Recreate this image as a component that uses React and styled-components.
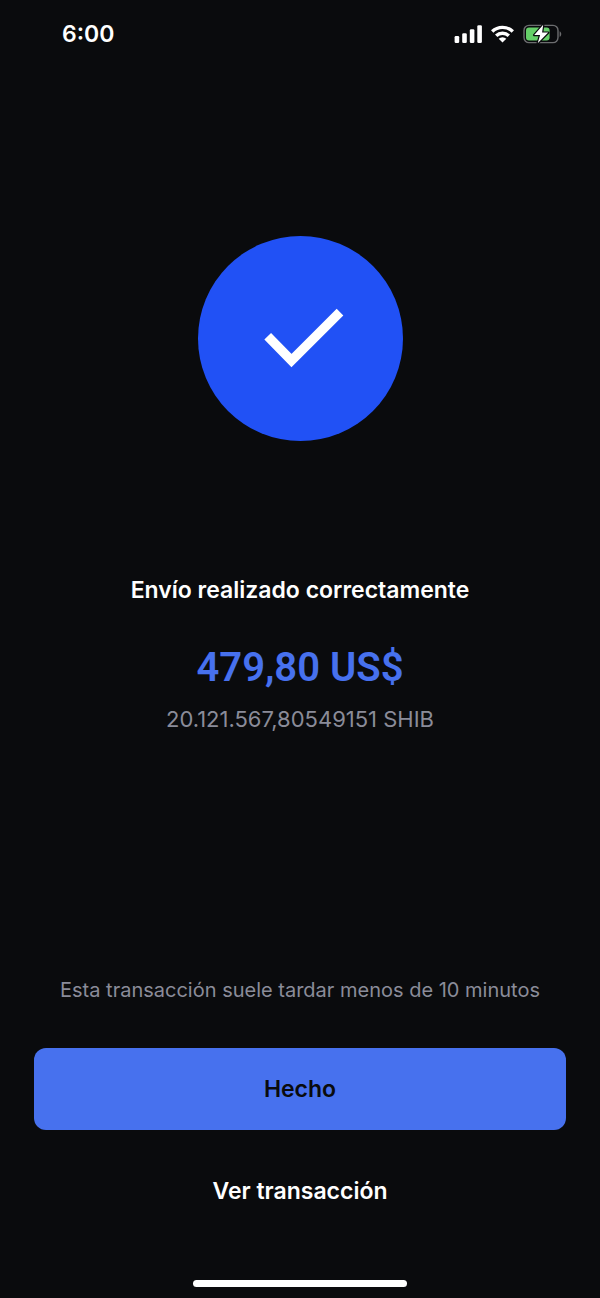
import React from 'react'
import styled, {createGlobalStyle} from 'styled-components'

const GlobalStyle = createGlobalStyle`
  * {
    box-sizing: border-box;
  }

  body {
    margin: 0;
    background-color: #0a0b0d;
    font-family: Inter, 'Liberation Sans', sans-serif;
  }
`

const Screen = styled.div`
  display: flex;
  flex-direction: column;
  min-height: 100vh;
  color: #ffffff;
`

const StatusBar = styled.header`
  display: flex;
  align-items: center;
  justify-content: space-between;
  height: 68px;
  padding: 0 38px 0 62px;
`

const Clock = styled.time`
  font-size: 23px;
  line-height: 28px;
  font-weight: 600;
`

const StatusIcons = styled.div`
  display: flex;
  align-items: center;
  gap: 8px;

  svg {
    display: block;
  }
`

const Content = styled.main`
  display: flex;
  flex: 1;
  flex-direction: column;
  align-items: center;
  justify-content: center;
  padding: 0 32px;
  text-align: center;
`

const Badge = styled.div`
  width: 205px;
  height: 205px;
  margin-bottom: 133px;
  border-radius: 50%;
  background-color: #2151f5;
`

const Title = styled.h1`
  margin: 0 0 38px;
  font-size: 23px;
  line-height: 32px;
  font-weight: 600;
`

const Amount = styled.p`
  margin: 0 0 11px;
  color: #4771ee;
  font-family: Roboto, Inter, sans-serif;
  font-size: 40px;
  line-height: 48px;
  font-weight: 600;
`

const CryptoAmount = styled.p`
  margin: 0;
  color: #8a8c99;
  font-size: 22px;
  line-height: 32px;
`

const Footer = styled.footer`
  display: flex;
  flex-direction: column;
  align-items: center;
  padding: 72px 34px 11px;
`

const Note = styled.p`
  margin: 0 0 42px;
  color: #8a8c99;
  font-size: 20px;
  line-height: 32px;
  text-align: center;
`

const Button = styled.button`
  width: 100%;
  height: 82px;
  border: 0;
  border-radius: 12px;
  background-color: ${({$primary}) => ($primary ? '#4771ee' : 'transparent')};
  color: ${({$primary}) => ($primary ? '#0a0b0d' : '#ffffff')};
  font-family: inherit;
  font-size: 23px;
  line-height: 32px;
  font-weight: 600;
  cursor: pointer;

  & + & {
    margin-top: 20px;
  }
`

const HomeIndicator = styled.div`
  width: 214px;
  height: 7px;
  margin-top: 48px;
  border-radius: 4px;
  background-color: #ffffff;
`

const SignalIcon = () => (
  <svg width='28' height='20' viewBox='0 0 28 20' fill='#fff' aria-hidden='true'>
    <rect x='0.6' y='12' width='4.6' height='7' rx='1.3' />
    <rect x='8.2' y='9.2' width='4.6' height='9.8' rx='1.3' />
    <rect x='15.8' y='5.2' width='4.6' height='13.8' rx='1.3' />
    <rect x='23.3' y='1.2' width='4.6' height='17.8' rx='1.3' />
  </svg>
)

const WifiIcon = () => (
  <svg width='25' height='20' viewBox='0 0 25 20' aria-hidden='true'>
    <g fill='none' stroke='#fff' strokeWidth='3.4'>
      <path d='M2.2 7.5a14.8 14.8 0 0 1 20.6 0' />
      <path d='M6.2 11.8a9 9 0 0 1 12.6 0' />
    </g>
    <path d='M12.5 18.6l-3.8-3.9a5.5 5.5 0 0 1 7.6 0z' fill='#fff' />
  </svg>
)

const BatteryIcon = () => (
  <svg width='39' height='20' viewBox='0 0 39 20' aria-hidden='true'>
    <rect x='1' y='1.4' width='34' height='17.2' rx='5' fill='none' stroke='#6c6d6f' strokeWidth='1.4' />
    <path d='M36.6 7.2c2.2.9 2.2 4.7 0 5.6z' fill='#6c6d6f' />
    <rect x='3' y='3.4' width='23.6' height='13.2' rx='3' fill='#65cf68' />
    <path
      d='M20.2 .8L11.2 11h5.9l-2.4 8.2L25.2 8.6h-6.1z'
      fill='#fff'
      stroke='#0a0b0d'
      strokeWidth='2.4'
      strokeLinejoin='round'
      paintOrder='stroke'
    />
  </svg>
)

const CheckIcon = () => (
  <svg width='205' height='205' viewBox='0 0 205 205' aria-hidden='true'>
    <path d='M69.7 100.3L93.5 124.5L142 76.2' fill='none' stroke='#fff' strokeWidth='9.4' />
  </svg>
)

const App = () => (
  <Screen>
    <GlobalStyle />
    <StatusBar>
      <Clock>6:00</Clock>
      <StatusIcons>
        <SignalIcon />
        <WifiIcon />
        <BatteryIcon />
      </StatusIcons>
    </StatusBar>
    <Content>
      <Badge>
        <CheckIcon />
      </Badge>
      <Title>Envío realizado correctamente</Title>
      <Amount>479,80 US$</Amount>
      <CryptoAmount>20.121.567,80549151 SHIB</CryptoAmount>
    </Content>
    <Footer>
      <Note>Esta transacción suele tardar menos de 10 minutos</Note>
      <Button type='button' $primary>Hecho</Button>
      <Button type='button'>Ver transacción</Button>
      <HomeIndicator />
    </Footer>
  </Screen>
)

export default App
